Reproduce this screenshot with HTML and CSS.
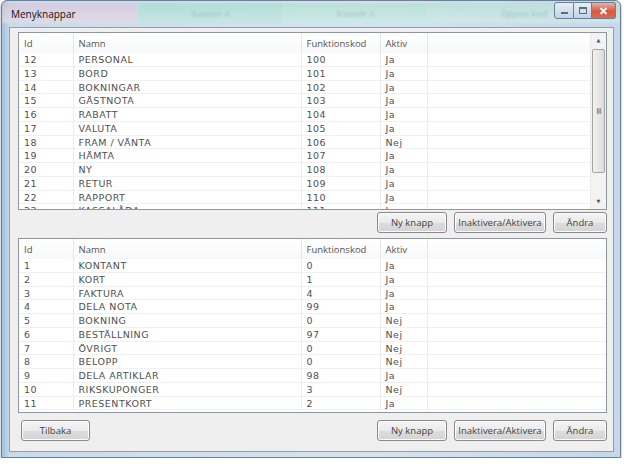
FILE: index.html
```html
<!DOCTYPE html>
<html lang="sv">
<head>
    <meta charset="UTF-8">
    <title>Menyknappar</title>
    <link rel="stylesheet" href="styles.css">
</head>
<body>

<div class="window">
    <div class="titlebar">
        <div class="glass">
            <span class="tab tab-a"></span>
            <span class="tab tab-b">Kassör A</span>
            <span class="tab tab-c">Kassör A</span>
            <span class="tab tab-d">Öppna kod</span>
        </div>
        <span class="title">Menyknappar</span>
        <div class="controls">
            <span class="ctl ctl-min"><i></i></span>
            <span class="ctl ctl-max"><i></i></span>
            <span class="ctl ctl-close">
                <svg width="9" height="8" viewBox="0 0 9 8"><path d="M1.5 1 L7.5 7 M7.5 1 L1.5 7" stroke="#fff" stroke-width="1.8"/></svg>
            </span>
        </div>
    </div>

    <div class="client">
        <div class="listview top-list">
            <div class="list-body">
                <table class="grid">
                    <colgroup><col class="c-id"><col class="c-name"><col class="c-code"><col class="c-act"><col></colgroup>
                    <thead>
                        <tr><th>Id</th><th>Namn</th><th>Funktionskod</th><th>Aktiv</th><th></th></tr>
                    </thead>
                    <tbody>
                        <tr><td>12</td><td>PERSONAL</td><td>100</td><td>Ja</td><td></td></tr>
                        <tr><td>13</td><td>BORD</td><td>101</td><td>Ja</td><td></td></tr>
                        <tr><td>14</td><td>BOKNINGAR</td><td>102</td><td>Ja</td><td></td></tr>
                        <tr><td>15</td><td>GÄSTNOTA</td><td>103</td><td>Ja</td><td></td></tr>
                        <tr><td>16</td><td>RABATT</td><td>104</td><td>Ja</td><td></td></tr>
                        <tr><td>17</td><td>VALUTA</td><td>105</td><td>Ja</td><td></td></tr>
                        <tr><td>18</td><td>FRAM / VÄNTA</td><td>106</td><td>Nej</td><td></td></tr>
                        <tr><td>19</td><td>HÄMTA</td><td>107</td><td>Ja</td><td></td></tr>
                        <tr><td>20</td><td>NY</td><td>108</td><td>Ja</td><td></td></tr>
                        <tr><td>21</td><td>RETUR</td><td>109</td><td>Ja</td><td></td></tr>
                        <tr><td>22</td><td>RAPPORT</td><td>110</td><td>Ja</td><td></td></tr>
                        <tr><td>23</td><td>KASSALÅDA</td><td>111</td><td>Ja</td><td></td></tr>
                    </tbody>
                </table>
            </div>
            <div class="scrollbar">
                <span class="arrow">&#9650;</span>
                <div class="track"><div class="thumb"><span class="grip">&#8801;</span></div></div>
                <span class="arrow">&#9660;</span>
            </div>
        </div>

        <div class="button-row">
            <button class="btn btn-new">Ny knapp</button>
            <button class="btn btn-toggle">Inaktivera/Aktivera</button>
            <button class="btn btn-edit">Ändra</button>
        </div>

        <div class="listview bottom-list">
            <div class="list-body">
                <table class="grid">
                    <colgroup><col class="c-id"><col class="c-name"><col class="c-code"><col class="c-act"><col></colgroup>
                    <thead>
                        <tr><th>Id</th><th>Namn</th><th>Funktionskod</th><th>Aktiv</th><th></th></tr>
                    </thead>
                    <tbody>
                        <tr><td>1</td><td>KONTANT</td><td>0</td><td>Ja</td><td></td></tr>
                        <tr><td>2</td><td>KORT</td><td>1</td><td>Ja</td><td></td></tr>
                        <tr><td>3</td><td>FAKTURA</td><td>4</td><td>Ja</td><td></td></tr>
                        <tr><td>4</td><td>DELA NOTA</td><td>99</td><td>Ja</td><td></td></tr>
                        <tr><td>5</td><td>BOKNING</td><td>0</td><td>Nej</td><td></td></tr>
                        <tr><td>6</td><td>BESTÄLLNING</td><td>97</td><td>Nej</td><td></td></tr>
                        <tr><td>7</td><td>ÖVRIGT</td><td>0</td><td>Nej</td><td></td></tr>
                        <tr><td>8</td><td>BELOPP</td><td>0</td><td>Nej</td><td></td></tr>
                        <tr><td>9</td><td>DELA ARTIKLAR</td><td>98</td><td>Ja</td><td></td></tr>
                        <tr><td>10</td><td>RIKSKUPONGER</td><td>3</td><td>Nej</td><td></td></tr>
                        <tr><td>11</td><td>PRESENTKORT</td><td>2</td><td>Ja</td><td></td></tr>
                    </tbody>
                </table>
            </div>
        </div>

        <div class="button-row bottom-row">
            <button class="btn btn-back">Tilbaka</button>
            <span class="spacer"></span>
            <button class="btn btn-new">Ny knapp</button>
            <button class="btn btn-toggle">Inaktivera/Aktivera</button>
            <button class="btn btn-edit">Ändra</button>
        </div>
    </div>
</div>

</body>
</html>
```

FILE: styles.css
```css
body {
    margin: 0;
    padding: 0;
    background-color: #ffffff;
    font-family: 'DejaVu Sans', sans-serif;
}
.window {
    width: 620px;
    height: 458px;
    margin-left: 1px;
    box-sizing: border-box;
    border: 1px solid #6b7f95;
    border-radius: 6px 6px 0 0;
    background: linear-gradient(to right, #9fc2dd 0px, #c9dcec 8px, #d5e3ef 60%, #c4d8ea 100%);
    display: flex;
    flex-direction: column;
    box-shadow: 0 1px 2px rgba(0, 0, 0, 0.5);
}
.titlebar {
    position: relative;
    height: 26px;
    flex: none;
}
.glass {
    position: absolute;
    left: 0;
    right: 0;
    top: 0;
    height: 26px;
    display: flex;
    opacity: 0.75;
    border-radius: 6px 6px 0 0;
    overflow: hidden;
}
.tab {
    height: 20px;
    margin-top: 2px;
    font-family: 'Liberation Sans', sans-serif;
    font-size: 9px;
    font-weight: bold;
    color: rgba(60, 110, 120, 0.25);
    text-align: center;
    line-height: 22px;
    filter: blur(1px);
}
.tab-a {
    width: 136px;
    background: linear-gradient(to bottom, #d8c6dc, #e8dbe6);
}
.tab-b {
    width: 146px;
    background: linear-gradient(to bottom, #a7dccf, #c6e9df);
}
.tab-c {
    width: 144px;
    background: linear-gradient(to bottom, #b2e0d4, #cdece3);
}
.tab-d {
    flex: 1;
    background: linear-gradient(to bottom, #b9e1d7, #d3ebe6);
}
.title {
    position: absolute;
    left: 9px;
    top: 6px;
    font-family: 'Open Sans', sans-serif;
    font-size: 10px;
    color: #111;
}
.controls {
    position: absolute;
    right: 4px;
    top: 1px;
    display: flex;
}
.ctl {
    height: 17px;
    box-sizing: border-box;
    border: 1px solid #6d7f94;
    background: linear-gradient(to bottom, #e6eef6, #c2d4e6);
    display: flex;
    align-items: center;
    justify-content: center;
}
.ctl-min {
    width: 20px;
    border-radius: 3px 0 0 3px;
}
.ctl-min i {
    width: 7px;
    height: 2px;
    margin-top: 5px;
    background: #5a6d82;
}
.ctl-max {
    width: 18px;
    border-left: none;
}
.ctl-max i {
    width: 6px;
    height: 4px;
    border: 1px solid #5a6d82;
    border-top-width: 2px;
}
.ctl-close {
    width: 24px;
    border-left: none;
    border-radius: 0 3px 3px 0;
    background: linear-gradient(to bottom, #eeb0a0, #d45a40 55%, #dc6c50);
}
.client {
    flex: 1;
    margin: 0 6px 5px 7px;
    background-color: #efefef;
    border: 1px solid #8aa0b6;
    padding: 4px 6px 0 8px;
    display: flex;
    flex-direction: column;
}
.listview {
    background-color: #ffffff;
    border: 1px solid #8e969e;
    display: flex;
    overflow: hidden;
}
.top-list {
    height: 176px;
}
.bottom-list {
    height: 173px;
}
.list-body {
    flex: 1;
    overflow: hidden;
}
.grid {
    width: 100%;
    border-collapse: collapse;
    table-layout: fixed;
    font-size: 9.5px;
    letter-spacing: 0.5px;
    color: #505050;
}
.c-id {
    width: 54px;
}
.c-name {
    width: 228px;
}
.c-code {
    width: 79px;
}
.c-act {
    width: 47px;
}
.grid th {
    height: 20px;
    padding: 0 0 0 5px;
    text-align: left;
    font-family: 'Open Sans', sans-serif;
    font-weight: normal;
    font-size: 9.5px;
    letter-spacing: 0;
    color: #555;
    border-right: 1px solid #e6e6e6;
    background: linear-gradient(to bottom, #ffffff, #f7f8fa);
}
.grid th:last-child {
    border-right: none;
}
.grid td {
    height: 13.75px;
    padding: 0 0 0 5px;
    line-height: 13.75px;
    background-image: linear-gradient(to top, #f0f0f0 1px, transparent 1px);
    border-right: 1px solid #ececec;
    white-space: nowrap;
    overflow: hidden;
}
.grid td:last-child {
    border-right: none;
}
.scrollbar {
    width: 15px;
    flex: none;
    display: flex;
    flex-direction: column;
    background-color: #f3f3f3;
    border-left: 1px solid #eaeaea;
}
.arrow {
    height: 15px;
    font-size: 5px;
    color: #555;
    text-align: center;
    line-height: 15px;
}
.track {
    flex: 1;
    padding: 0 1px;
}
.thumb {
    margin-top: 1px;
    height: 122px;
    border: 1px solid #a5a5a5;
    border-radius: 2px;
    background: linear-gradient(to right, #f2f2f2, #dcdcdc);
    display: flex;
    align-items: center;
    justify-content: center;
}
.grip {
    font-size: 9px;
    color: #666;
    transform: rotate(90deg);
}
.button-row {
    display: flex;
    justify-content: flex-end;
    gap: 7px;
    margin: 2px 0 5px 0;
}
.bottom-row {
    margin-top: 7px;
    padding-left: 3px;
}
.spacer {
    flex: 1;
}
.btn {
    height: 21px;
    padding: 0;
    font-family: 'Open Sans', sans-serif;
    font-size: 9.5px;
    color: #444;
    border: 1px solid #8a8a8a;
    border-radius: 3px;
    background: linear-gradient(to bottom, #f4f4f4 0%, #ebebeb 50%, #dddddd 51%, #d4d4d4 100%);
    box-shadow: inset 0 0 0 1px #fbfbfb;
}
.btn-new {
    width: 70px;
}
.btn-toggle {
    width: 92px;
}
.btn-edit {
    width: 54px;
}
.btn-back {
    width: 69px;
}
```
